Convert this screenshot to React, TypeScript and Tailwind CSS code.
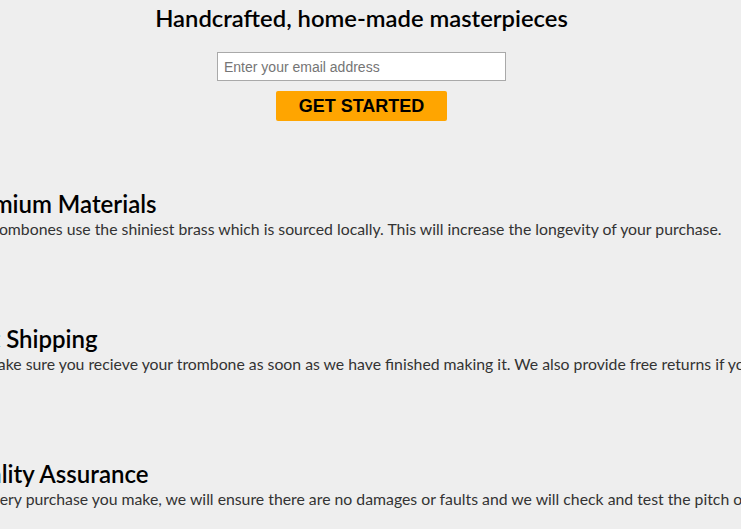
import React from "react";

const features = [
  {
    title: "Premium Materials",
    desc: "Our trombones use the shiniest brass which is sourced locally. This will increase the longevity of your purchase.",
  },
  {
    title: "Fast Shipping",
    desc: "We make sure you recieve your trombone as soon as we have finished making it. We also provide free returns if you are not satisfied.",
  },
  {
    title: "Quality Assurance",
    desc: "For every purchase you make, we will ensure there are no damages or faults and we will check and test the pitch of your instrument.",
  },
];

export default function App() {
  return (
    <div className="h-[529px] w-full overflow-hidden bg-[#eeeeee] font-['Lato',sans-serif] text-black">
      {/* Hero */}
      <section className="flex flex-col items-center pr-[18px] pt-[3px]">
        <h2 className="text-[23.8px] font-semibold leading-[30px]">Handcrafted, home-made masterpieces</h2>
        <form className="mt-[19px] flex flex-col items-center">
          <input
            type="email"
            placeholder="Enter your email address"
            className="h-[29px] w-[289px] border border-[#a9a9a9] bg-white px-[6px] font-['Liberation_Sans',Arial,sans-serif] text-[14px] text-black outline-none placeholder:text-[#757575]"
          />
          <button
            type="button"
            className="mt-[10px] h-[30px] w-[171px] rounded-[2px] bg-[#ffa500] font-['Liberation_Sans',Arial,sans-serif] text-[18px] font-bold leading-[30px] text-black"
          >
            GET STARTED
          </button>
        </form>
      </section>

      {/* Features */}
      <section className="ml-[-43px] mt-[68px] whitespace-nowrap">
        {features.map((f) => (
          <div key={f.title} className="mb-[86px]">
            <h2 className="text-[24px] font-semibold leading-[30px]">{f.title}</h2>
            <p className="text-[15.8px] leading-[19px] text-[#333]">{f.desc}</p>
          </div>
        ))}
      </section>
    </div>
  );
}
